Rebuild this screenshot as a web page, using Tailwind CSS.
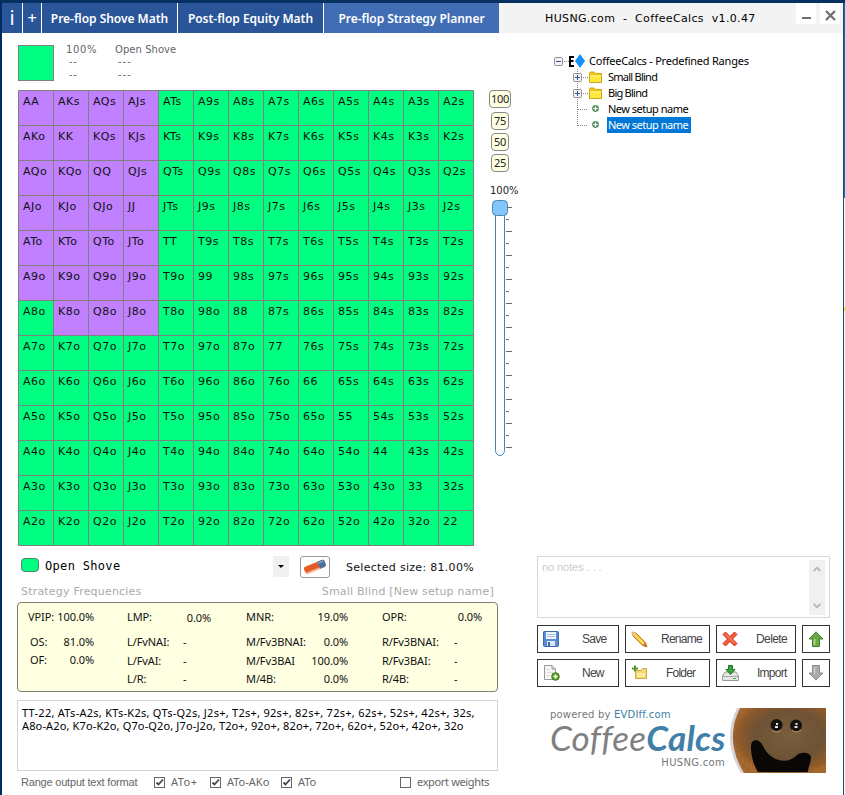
<!DOCTYPE html>
<html lang="en">
<head>
<meta charset="utf-8">
<title>CoffeeCalcs</title>
<script src="https://cdn.jsdelivr.net/npm/@tailwindcss/browser@4"></script>
</head>
<body class="w-[845px] h-[795px] overflow-hidden bg-white">
<div class="relative w-[845px] h-[795px] flex flex-col bg-white border-l-2 border-t-3 border-l-[#002b60] border-t-[#06305f] font-['DejaVu_Sans',sans-serif] text-[11px] whitespace-nowrap overflow-hidden">
  <!-- desktop edge on the right -->
  <div class="absolute right-0 top-0 w-[2px] h-[795px] bg-white border-l border-[#174d66]"></div>
  <div class="absolute right-0 top-0 w-px h-[195px] bg-[#0870cc]"></div>
  <div class="absolute right-0 top-[304px] w-px h-[4px] bg-[#e8e800]"></div>

  <!-- title bar -->
  <header class="flex h-[30px] w-[841px] shrink-0 bg-[#f3f3f3]">
    <nav class="flex h-full text-white font-['Noto_Sans','Open_Sans',sans-serif] font-semibold text-[12px] tracking-[-0.03px] leading-[31px] text-center">
      <div class="w-[21px] bg-[#2a5699] border-r border-white font-normal text-[20px] leading-[29px]">i</div>
      <div class="w-[19px] bg-[#2a5699] border-r border-white font-normal text-[17px] leading-[29px]">+</div>
      <div class="w-[136px] bg-[#2a5699] border-r border-white">Pre-flop Shove Math</div>
      <div class="w-[146px] bg-[#2a5699] border-r border-white">Post-flop Equity Math</div>
      <div class="w-[175px] bg-[#416db5]">Pre-flop Strategy Planner</div>
    </nav>
    <div class="ml-[46px] mt-px w-[251px] leading-[29px] text-[11px] tracking-[0.36px] text-black whitespace-pre">HUSNG.com  -  CoffeeCalcs  v1.0.47</div>
    <div class="w-[20px] h-[21px] bg-white flex justify-center"><i class="block w-[9px] h-[2px] mt-[14px] bg-[#707070]"></i></div>
    <div class="ml-[4px] w-[20px] h-[21px] bg-white flex items-start pt-[7px] justify-center">
      <svg width="11" height="11" viewBox="0 0 11 11"><path d="M1 1L10 10M10 1L1 10" stroke="#707070" stroke-width="2.300"/></svg>
    </div>
  </header>

  <main class="flex">
    <section class="w-[484px] shrink-0 ml-[15px]">
      <!-- legend -->
      <div class="flex h-[57px] pt-[12px] pl-px text-[#666] text-[10px] leading-[13px]">
        <div class="w-[36px] h-[36px] border border-[#808080] bg-[#00ff80]"></div>
        <div class="ml-[12px] w-[49px] -mt-[2px] tracking-[0.6px]"><div>100%</div><div class="pl-[3px] -mt-px">--</div><div class="pl-[3px]">--</div></div>
        <div class="-mt-[2px] tracking-[0.05px]"><div>Open Shove</div><div class="pl-[3px] -mt-px tracking-[1px]">---</div><div class="pl-[3px] tracking-[1px]">---</div></div>
      </div>

      <div class="flex">
        <div id="hands" class="ml-px w-[456px] h-[456px] shrink-0 grid grid-cols-[repeat(13,35px)] grid-rows-[repeat(13,35px)] border-t border-l border-[#808080]"></div>
        <div class="ml-[13px] w-[34px] shrink-0 flex flex-col text-[#222]">
          <div class="w-[26px] flex flex-col items-center gap-[3px] text-[11px] tracking-[-0.3px] leading-[16px] text-center font-['Noto_Sans',sans-serif]">
            <div class="w-[22px] h-[18px] mb-px border border-[#888] rounded-[4px] bg-[#ffffe1]">100</div>
            <div class="w-[18px] h-[18px] border border-[#888] rounded-[4px] bg-[#ffffe1]">75</div>
            <div class="w-[18px] h-[18px] border border-[#888] rounded-[4px] bg-[#ffffe1]">50</div>
            <div class="w-[18px] h-[18px] border border-[#888] rounded-[4px] bg-[#ffffe1]">25</div>
          </div>
          <div class="mt-[12px] ml-[3px] h-[14px] leading-[14px] text-[10px]">100%</div>
          <svg class="mt-[2px] ml-[5px]" width="22" height="258" viewBox="0 0 22 258">
            <path d="M3.500 8V250.500a4.500 5 0 0 0 9 0V8" fill="#fdfeff" stroke="#4585b0"/>
            <rect x=".5" y=".5" width="15" height="15" rx="4" fill="#84c6fa" stroke="#4585b0"/>
            <path id="ticks" stroke="#666" fill="none"/>
          </svg>
        </div>
      </div>

      <!-- selected action -->
      <div class="flex h-[35px] pt-[10px] pl-[4px]">
        <div class="mt-[2px] w-[18px] h-[14px] rounded-[4px] border border-[#50806a] bg-[#00ff80]"></div>
        <div class="ml-[6px] w-[228px] leading-[21px] text-[12px] tracking-[0.32px] text-black font-['DejaVu_Sans_Mono',monospace] whitespace-pre">Open Shove</div>
        <div class="w-[16px] h-[21px] bg-[#f0f0f0] flex justify-center"><svg class="mt-[9px]" width="6" height="3"><path d="M0 0H6L3 3Z" fill="#000"/></svg></div>
        <div class="ml-[11px] w-[30px] h-[22px] rounded-[3px] border border-[#999] flex items-center justify-center">
          <svg width="24" height="16" viewBox="0 0 24 16"><g transform="rotate(-22 12 8)"><rect x="1" y="5" width="22" height="7" rx="2" fill="#f8b59b"/><rect x="1" y="4" width="22" height="6" rx="2" fill="#e65b25"/><path d="M16 4H21a2 2 0 0 1 2 2V9.500a2 2 0 0 1-2 2H16Z" fill="#48739f"/><path d="M16 5H22V6H16Z" fill="#8baed0"/></g></svg>
        </div>
        <div class="ml-[16px] leading-[23px] text-[11px] tracking-[0.3px] text-[#111]">Selected size: 81.00%</div>
      </div>
      <div class="flex justify-between h-[21px] pl-[4px] pr-[7px] leading-[21px] text-[11px] text-[#aaa]"><span class="tracking-[0.2px]">Strategy Frequencies</span><span class="tracking-[0.2px]">Small Blind [New setup name]</span></div>

      <!-- frequencies -->
      <div class="w-[481px] h-[90px] rounded-[4px] border border-[#808070] bg-[#ffffe1] flex pt-[5px] text-[#111] font-['Noto_Sans',sans-serif] text-[11px] leading-[18px] tracking-[-0.1px]">
        <div class="ml-[10px] w-[66px]">
          <div class="flex justify-between h-[25px]"><span>VPIP:</span><span>100.0%</span></div>
          <div class="flex justify-between h-[18px] pl-[2px]"><span>OS:</span><span>81.0%</span></div>
          <div class="flex justify-between h-[18px] pl-[2px]"><span>OF:</span><span>0.0%</span></div>
        </div>
        <div class="ml-[33px] w-[84px]">
          <div class="flex justify-between h-[25px]"><span>LMP:</span><span class="pt-px">0.0%</span></div>
          <div class="flex h-[19px]"><span class="w-[56px]">L/FvNAI:</span><span>-</span></div>
          <div class="flex h-[18px]"><span class="w-[56px]">L/FvAI:</span><span>-</span></div>
          <div class="flex h-[18px]"><span class="w-[56px]">L/R:</span><span>-</span></div>
        </div>
        <div class="ml-[35px] w-[102px]">
          <div class="flex justify-between h-[25px]"><span>MNR:</span><span>19.0%</span></div>
          <div class="flex justify-between h-[19px]"><span>M/Fv3BNAI:</span><span>0.0%</span></div>
          <div class="flex justify-between h-[18px]"><span>M/Fv3BAI</span><span>100.0%</span></div>
          <div class="flex justify-between h-[18px]"><span>M/4B:</span><span>0.0%</span></div>
        </div>
        <div class="ml-[34px] w-[100px]">
          <div class="flex justify-between h-[25px]"><span>OPR:</span><span>0.0%</span></div>
          <div class="flex h-[19px]"><span class="w-[72px]">R/Fv3BNAI:</span><span>-</span></div>
          <div class="flex h-[18px]"><span class="w-[72px]">R/Fv3BAI:</span><span>-</span></div>
          <div class="flex h-[18px]"><span class="w-[72px]">R/4B:</span><span>-</span></div>
        </div>
      </div>

      <!-- range output -->
      <div class="mt-[8px] w-[481px] h-[71px] border border-[#d4d4d4] pt-[5px] pl-[4px] text-black font-['Noto_Sans',sans-serif] text-[11px] leading-[13px]">
        <div class="tracking-[0.27px]">TT-22, ATs-A2s, KTs-K2s, QTs-Q2s, J2s+, T2s+, 92s+, 82s+, 72s+, 62s+, 52s+, 42s+, 32s,</div>
        <div class="tracking-[0.14px]">A8o-A2o, K7o-K2o, Q7o-Q2o, J7o-J2o, T2o+, 92o+, 82o+, 72o+, 62o+, 52o+, 42o+, 32o</div>
      </div>
      <div class="flex items-center h-[22px] pl-[4px] text-[#666] text-[11px] font-['Noto_Sans',sans-serif]">
        <span class="w-[133px] font-['Liberation_Sans',sans-serif] text-[11px] tracking-[-0.2px]">Range output text format</span>
        <svg width="11" height="11" viewBox="0 0 11 11"><rect x=".5" y=".5" width="10" height="10" fill="none" stroke="#666"/><path d="M2.500 5.500L4.500 7.500L9 2.500" fill="none" stroke="#444" stroke-width="1.800"/></svg>
        <span class="ml-[6px] w-[39px] tracking-[0.5px]">ATo+</span>
        <svg width="11" height="11" viewBox="0 0 11 11"><rect x=".5" y=".5" width="10" height="10" fill="none" stroke="#666"/><path d="M2.500 5.500L4.500 7.500L9 2.500" fill="none" stroke="#444" stroke-width="1.800"/></svg>
        <span class="ml-[6px] w-[54px]">ATo-AKo</span>
        <svg width="11" height="11" viewBox="0 0 11 11"><rect x=".5" y=".5" width="10" height="10" fill="none" stroke="#666"/><path d="M2.500 5.500L4.500 7.500L9 2.500" fill="none" stroke="#444" stroke-width="1.800"/></svg>
        <span class="ml-[6px] w-[102px]">ATo</span>
        <svg width="11" height="11" viewBox="0 0 11 11"><rect x=".5" y=".5" width="10" height="10" fill="none" stroke="#666"/></svg>
        <span class="ml-[6px] tracking-[-0.35px]">export weights</span>
      </div>
    </section>

    <section class="ml-[36px] w-[293px] h-[762px] shrink-0 flex flex-col">
      <!-- tree -->
      <div class="h-[503px] pt-[20px] pl-[17px] text-black font-['Noto_Sans',sans-serif] text-[11px] leading-[16px]">
        <div class="flex h-[16px] items-center">
          <svg width="32" height="16" viewBox="0 0 32 16"><rect x=".5" y="4.500" width="8" height="8" rx="1" fill="#f2f2f2" stroke="#919191"/><path d="M2 8.500H7" stroke="#3355a0"/><path d="M10 8.500H15" stroke="#888" stroke-dasharray="1 1"/><path d="M15 3H20V5H17V7H19.500V9H17V12H20V14H15Z" fill="#000"/><path d="M26 1L31 8L26 15L21 8Z" fill="#1590fa"/></svg>
          <span class="ml-[3px] tracking-[-0.23px]">CoffeeCalcs - Predefined Ranges</span>
        </div>
        <div class="flex h-[16px] items-center">
          <svg width="51" height="16" viewBox="0 0 51 16"><path d="M23.500 0V4M23.500 12V16M29 8.500H34" stroke="#888" stroke-dasharray="1 1"/><rect x="19.500" y="4.500" width="8" height="8" rx="1" fill="#f2f2f2" stroke="#919191"/><path d="M21 8.500H26M23.500 6V11" stroke="#3355a0"/><path d="M35.500 4.500Q35.500 3 37 3H40L41.500 4.500H47.500V13.500H35.500Z" fill="#f0c818" stroke="#cfa318"/><path d="M36 6.500H47V13H36Z" fill="#ffe83c"/><path d="M36 7H47" stroke="#fff59a"/></svg>
          <span class="ml-[3px] tracking-[-0.75px]">Small Blind</span>
        </div>
        <div class="flex h-[16px] items-center">
          <svg width="51" height="16" viewBox="0 0 51 16"><path d="M23.500 0V4M23.500 12V16M29 8.500H34" stroke="#888" stroke-dasharray="1 1"/><rect x="19.500" y="4.500" width="8" height="8" rx="1" fill="#f2f2f2" stroke="#919191"/><path d="M21 8.500H26M23.500 6V11" stroke="#3355a0"/><path d="M35.500 4.500Q35.500 3 37 3H40L41.500 4.500H47.500V13.500H35.500Z" fill="#f0c818" stroke="#cfa318"/><path d="M36 6.500H47V13H36Z" fill="#ffe83c"/><path d="M36 7H47" stroke="#fff59a"/></svg>
          <span class="ml-[3px] tracking-[-0.75px]">Big Blind</span>
        </div>
        <div class="flex h-[16px] items-center">
          <svg width="51" height="16" viewBox="0 0 51 16"><path d="M23.500 0V16M24 8.500H34" stroke="#888" stroke-dasharray="1 1"/><circle cx="41.500" cy="7.500" r="3.400" fill="#5f9468"/><path d="M39.500 7.500H43.500M41.500 5.500V9.500" stroke="#fff" stroke-width="1.200"/></svg>
          <span class="ml-[3px] tracking-[-0.5px]">New setup name</span>
        </div>
        <div class="flex h-[16px] items-center">
          <svg width="50" height="16" viewBox="0 0 50 16"><path d="M23.500 0V9M24 8.500H34" stroke="#888" stroke-dasharray="1 1"/><circle cx="41.500" cy="7.500" r="3.400" fill="#5f9468"/><path d="M39.500 7.500H43.500M41.500 5.500V9.500" stroke="#fff" stroke-width="1.200"/></svg>
          <span class="ml-[3px] px-px w-[84px] tracking-[-0.5px] bg-[#0078d7] text-white">New setup name</span>
        </div>
      </div>

      <!-- notes -->
      <div class="mt-[20px] w-[293px] h-[62px] border border-[#d8d8d8] flex justify-between pl-[4px] pr-[4px] pt-[3px] text-[#ccc] text-[11px] leading-[14px] font-['Liberation_Sans',sans-serif]">
        <span class="tracking-[-0.08px]">no notes . . .</span>
        <div class="w-[16px] h-[55px] bg-[#f0f0f0] flex flex-col items-center justify-between py-[6px]">
          <svg width="8" height="6" viewBox="0 0 8 6"><path d="M.7 5L4 1.700L7.300 5" fill="none" stroke="#b5b5b5" stroke-width="1.800"/></svg>
          <svg width="8" height="6" viewBox="0 0 8 6"><path d="M.7 1L4 4.300L7.300 1" fill="none" stroke="#b5b5b5" stroke-width="1.800"/></svg>
        </div>
      </div>

      <!-- commands -->
      <div class="mt-[7px] grid grid-cols-[82px_85px_80px_28px] grid-rows-[28px_28px] gap-x-[6px] gap-y-[6px] text-[#444] text-[12px] tracking-[-0.75px] leading-[24px] font-['Liberation_Sans',sans-serif]">
        <div class="border border-[#333] flex items-center pl-[5px]"><svg width="16" height="16" viewBox="0 0 16 16"><rect x=".5" y=".5" width="15" height="15" rx="1" fill="#5b8dd0" stroke="#3c68ad"/><rect x="3" y="1" width="10" height="7" fill="#eef4fc"/><path d="M4 3.500H12M4 5.500H12" stroke="#a9c1e3"/><rect x="4" y="10" width="8" height="5" fill="#dce8f6"/><rect x="5" y="11" width="2" height="4" fill="#41699d"/></svg><span class="ml-[23px]">Save</span></div>
        <div class="border border-[#333] flex items-center pl-[5px]"><svg width="17" height="17" viewBox="0 0 17 17"><path d="M1 1L5 2L14.500 11.500L16 16L11.500 14.500L2 5Z" fill="#f3b52c" stroke="#bd8722"/><path d="M3 3L13 13" stroke="#ffe37a" stroke-width="1.500"/><path d="M1 1L5 2L2 5Z" fill="#ead3aa"/><path d="M11.500 14.500L14.500 11.500L16 16Z" fill="#cf694f"/></svg><span class="ml-[13px]">Rename</span></div>
        <div class="border border-[#333] flex items-center pl-[5px]"><svg width="16" height="16" viewBox="0 0 16 16"><path d="M1 3.500L3.500 1L8 5.500L12.500 1L15 3.500L10.500 8L15 12.500L12.500 15L8 10.500L3.500 15L1 12.500L5.500 8Z" fill="#f45a3a" stroke="#cf3420"/><path d="M3.500 3L12.500 12" stroke="#ff9b7e"/></svg><span class="ml-[18px] tracking-[-0.6px]">Delete</span></div>
        <div class="border border-[#333] flex items-center justify-center"><svg width="16" height="16" viewBox="0 0 16 16"><path d="M8 .8L15 8H11.500V15.500H4.500V8H1Z" fill="#68a947" stroke="#45812d"/><path d="M6.500 8V14" stroke="#a7d08c" stroke-width="2"/></svg></div>
        <div class="border border-[#333] flex items-center pl-[5px]"><svg width="17" height="16" viewBox="0 0 17 16"><path d="M1.500 .5H9L12.500 4V14.500H1.500Z" fill="#f5f5f5" stroke="#999"/><path d="M9 .5V4H12.500" fill="#ddd" stroke="#999"/><path d="M3.500 4.500H7M3.500 7.500H10M3.500 10.500H7" stroke="#ddd"/><circle cx="12.500" cy="11.500" r="3.800" fill="#5ba427" stroke="#397817"/><path d="M10.500 11.500H14.500M12.500 9.500V13.500" stroke="#fff" stroke-width="1.500"/></svg><span class="ml-[22px]">New</span></div>
        <div class="border border-[#333] flex items-center pl-[5px]"><svg width="17" height="16" viewBox="0 0 17 16"><path d="M4.500 5.500H10L11.500 3.500H15.500V13.500H4.500Z" fill="#f6d670" stroke="#cfaa4b"/><path d="M6 8H14V12H6Z" fill="#ffeaa0"/><path d="M1 3.500H7M4 .5V6.500" stroke="#579829" stroke-width="2"/></svg><span class="ml-[18px] tracking-[-0.8px]">Folder</span></div>
        <div class="border border-[#333] flex items-center pl-[5px]"><svg width="17" height="16" viewBox="0 0 17 16"><path d="M3 7H14L16.500 11V15.500H.5V11Z" fill="#e6e6e6" stroke="#999"/><path d="M1 11.500H16" stroke="#aaa"/><path d="M11 13.500H14" stroke="#50a830"/><path d="M6.500 .5H10.500V4.500H13L8.500 9.500L4 4.500H6.500Z" fill="#35a536" stroke="#1d7925"/></svg><span class="ml-[18px]">Import</span></div>
        <div class="border border-[#333] flex items-center justify-center"><svg width="16" height="16" viewBox="0 0 16 16"><path d="M8 15.200L15 8H11.500V.5H4.500V8H1Z" fill="#aaa" stroke="#8b8b8b"/><path d="M6.500 2V9" stroke="#c4c4c4" stroke-width="2"/></svg></div>
      </div>

      <!-- branding -->
      <div class="mt-[21px] flex pl-[13px]">
        <div class="w-[177px] text-[#777]">
          <div class="leading-[14px] text-[10px] tracking-[0.2px]">powered by <span class="text-[#4080a8]">EVDIff.com</span></div>
          <div class="h-[34px] leading-[31px] text-[35px] italic font-['Lato',sans-serif] tracking-[0.3px] text-[#808080]">Coffee<b class="text-[#4080a8]">Calcs</b></div>
          <div class="h-[14px] leading-[14px] text-[10px] w-[175px] text-right tracking-[0.3px]">HUSNG.com</div>
        </div>
        <svg class="ml-[2px]" width="98" height="65" viewBox="0 0 98 65">
          <defs>
            <radialGradient id="coffee" cx=".6" cy=".42" r=".62"><stop offset="0" stop-color="#7a6040"/><stop offset=".6" stop-color="#6b5136"/><stop offset=".88" stop-color="#945b27"/><stop offset="1" stop-color="#af6b2f"/></radialGradient>
            <filter id="grain" x="0" y="0" width="1" height="1"><feTurbulence type="fractalNoise" baseFrequency=".6" numOctaves="2" seed="4"/><feColorMatrix values="0 0 0 0 .2  0 0 0 0 .1  0 0 0 0 .03  0 5 0 0 -2.300"/><feComposite in2="SourceGraphic" operator="in"/></filter>
          </defs>
          <path d="M8 0Q-8 32 12 65H97V0Z" fill="#d4d4d8"/>
          <path d="M11 0Q-5 32 15 65H97V0Z" fill="url(#coffee)"/>
          <path d="M11 0Q-5 32 15 65H97V0Z" filter="url(#grain)" opacity=".6"/>
          <path d="M23 34C27 30 32 33 34 38C41 53 58 57 67 48C71 43 81 44 82 49C82 55 79 59 79 64H29C24 57 20 41 23 34Z" fill="#090807"/>
          <circle cx="47.500" cy="17" r="6" fill="#15110d"/><circle cx="67" cy="17.500" r="6" fill="#15110d"/>
          <path d="M47 15h2v2h-2zM46 18h3v2h-3zM66.500 15h2v2h-2zM65.500 18h3v2h-3z" fill="#e5e5e5"/>
          <path d="M43 22Q48 26 52 22M63 22Q67 26 72 22" stroke="#b69673" fill="none"/>
        </svg>
      </div>
    </section>
  </main>
</div>
<script>
const ranks = 'AKQJT98765432';
let cells = '';
for (let r = 0; r < 13; r++) for (let c = 0; c < 13; c++) {
  const hand = r === c ? ranks[r] + ranks[r] : r < c ? ranks[r] + ranks[c] + 's' : ranks[c] + ranks[r] + 'o';
  const fold = c < 4 && (r < 6 || (r === 6 && c > 0));
  cells += `<div class="border-r border-b border-[#808080] pl-[4px] pt-[4px] text-[11px] leading-[14px] tracking-[0.5px] text-[#111] ${fold ? 'bg-[#c080ff]' : 'bg-[#00ff80]'}">${hand}</div>`;
}
document.getElementById('hands').innerHTML = cells;
let d = '';
for (let i = 0; i <= 20; i++) d += i % 2 ? `M14 ${7.5 + i * 12}H17` : `M${i ? 14 : 16} ${7.5 + i * 12}H20`;
document.getElementById('ticks').setAttribute('d', d);
</script>
</body>
</html>
